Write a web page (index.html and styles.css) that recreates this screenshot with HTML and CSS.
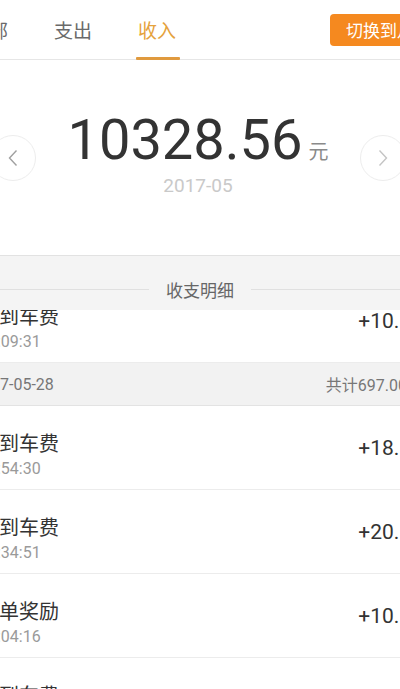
FILE: index.html
```html
<!DOCTYPE html>
<html lang="zh-CN">
<head>
<meta charset="utf-8">
<title>收支明细</title>
<link rel="stylesheet" href="styles.css">
</head>
<body>
<div class="screen">
  <header class="topbar">
    <nav class="tabs">
      <div class="tab">全部</div>
      <div class="tab">支出</div>
      <div class="tab active">收入</div>
    </nav>
    <button class="switch">切换到月份</button>
  </header>

  <section class="hero">
    <div class="circle">
      <svg width="10" height="18" viewBox="0 0 10 18"><polyline points="8.5,1.5 1.5,9 8.5,16.5" fill="none" stroke="#a0a0a0" stroke-width="1.4"/></svg>
    </div>
    <div class="summary">
      <div class="total"><span class="amount">10328.56</span><span class="unit">元</span></div>
      <div class="month">2017-05</div>
    </div>
    <div class="circle">
      <svg width="10" height="18" viewBox="0 0 10 18"><polyline points="1.5,1.5 8.5,9 1.5,16.5" fill="none" stroke="#c4c4c4" stroke-width="1.4"/></svg>
    </div>
  </section>

  <section class="detail">
    <div class="detail-head">
      <span class="line"></span>
      <span class="label">收支明细</span>
      <span class="line"></span>
    </div>
    <div class="list">
      <div class="item first">
        <div class="main"><div class="title">接到车费</div><div class="time">07:09:31</div></div>
        <div class="money">+10.00</div>
      </div>
      <div class="day"><span>2017-05-28</span><span>共计697.00</span></div>
      <div class="item">
        <div class="main"><div class="title">接到车费</div><div class="time">21:54:30</div></div>
        <div class="money">+18.00</div>
      </div>
      <div class="item">
        <div class="main"><div class="title">接到车费</div><div class="time">20:34:51</div></div>
        <div class="money">+20.00</div>
      </div>
      <div class="item">
        <div class="main"><div class="title">冲单奖励</div><div class="time">20:04:16</div></div>
        <div class="money">+10.00</div>
      </div>
      <div class="item">
        <div class="main"><div class="title">接到车费</div><div class="time">19:48:02</div></div>
        <div class="money">+15.00</div>
      </div>
    </div>
  </section>
</div>
</body>
</html>
```
FILE: styles.css
```css
html, body {
  margin: 0;
  padding: 0;
  background: #ffffff;
  overflow: hidden;
  height: 689px;
}
body {
  font-family: Roboto, "Noto Sans CJK SC", sans-serif;
  color: #333333;
}
.screen {
  width: 520px;
  margin-left: -60px;
}

/* top bar */
.topbar {
  display: flex;
  align-items: center;
  height: 59px;
  box-sizing: content-box;
  border-bottom: 1px solid #e6e6e6;
  padding: 0 13px 0 7px;
}
.tabs {
  display: flex;
}
.tab {
  position: relative;
  width: 84px;
  height: 59px;
  display: flex;
  align-items: center;
  justify-content: center;
  font-size: 19px;
  color: #6a6a6a;
}
.tab.active {
  color: #e5a23c;
}
.tab.active::after {
  content: "";
  position: absolute;
  left: 21px;
  right: 19px;
  bottom: -1px;
  height: 3px;
  background: #e09a3e;
  border-radius: 1px;
}
.switch {
  margin-left: auto;
  height: 32px;
  padding: 0 16px;
  border: none;
  border-radius: 4px;
  background: #f5891f;
  color: #ffffff;
  font-family: Roboto, "Noto Sans CJK SC", sans-serif;
  font-size: 17px;
  white-space: nowrap;
}

/* hero */
.hero {
  display: flex;
  align-items: center;
  justify-content: space-between;
  height: 195px;
  padding: 0 54px 0 50px;
}
.circle {
  width: 44px;
  height: 44px;
  border: 1px solid #ededed;
  border-radius: 50%;
  display: flex;
  align-items: center;
  justify-content: center;
}
.summary {
  display: flex;
  flex-direction: column;
  align-items: center;
  padding-bottom: 6px;
}
.total {
  display: flex;
  align-items: baseline;
  line-height: 56px;
}
.amount {
  font-size: 56px;
  color: #333333;
}
.unit {
  font-size: 20px;
  color: #8a8a8a;
  margin-left: 6px;
}
.month {
  margin-top: -5px;
  font-size: 19px;
  line-height: 22px;
  color: #c9c9c9;
}

/* detail */
.detail {
  background: #f4f4f4;
  border-top: 1px solid #e2e2e2;
}
.detail-head {
  position: relative;
  z-index: 1;
  display: flex;
  align-items: center;
  height: 54px;
  box-sizing: border-box;
  padding-top: 13px;
  background: #f4f4f4;
}
.line {
  flex: 1;
  border-top: 1px solid #e0e0e0;
}
.label {
  padding: 0 17px;
  font-size: 17px;
  color: #666666;
}
.list {
  overflow: hidden;
  background: #ffffff;
}
.item {
  display: flex;
  justify-content: space-between;
  height: 84px;
  box-sizing: border-box;
  border-bottom: 1px solid #ececec;
  padding: 0 37px 0 39px;
  background: #ffffff;
}
.item.first {
  margin-top: -31px;
}
.main {
  padding-top: 26px;
}
.title {
  font-size: 20px;
  line-height: 24px;
  color: #333333;
  white-space: nowrap;
}
.time {
  margin-top: 3px;
  font-size: 16px;
  line-height: 20px;
  color: #9a9a9a;
}
.money {
  align-self: center;
  font-size: 21px;
  color: #333333;
}
.day {
  display: flex;
  justify-content: space-between;
  align-items: center;
  height: 43px;
  box-sizing: border-box;
  padding: 0 53px 0 33px;
  background: #f2f2f2;
  border-bottom: 1px solid #e3e3e3;
  font-size: 16px;
  color: #777777;
}
```
